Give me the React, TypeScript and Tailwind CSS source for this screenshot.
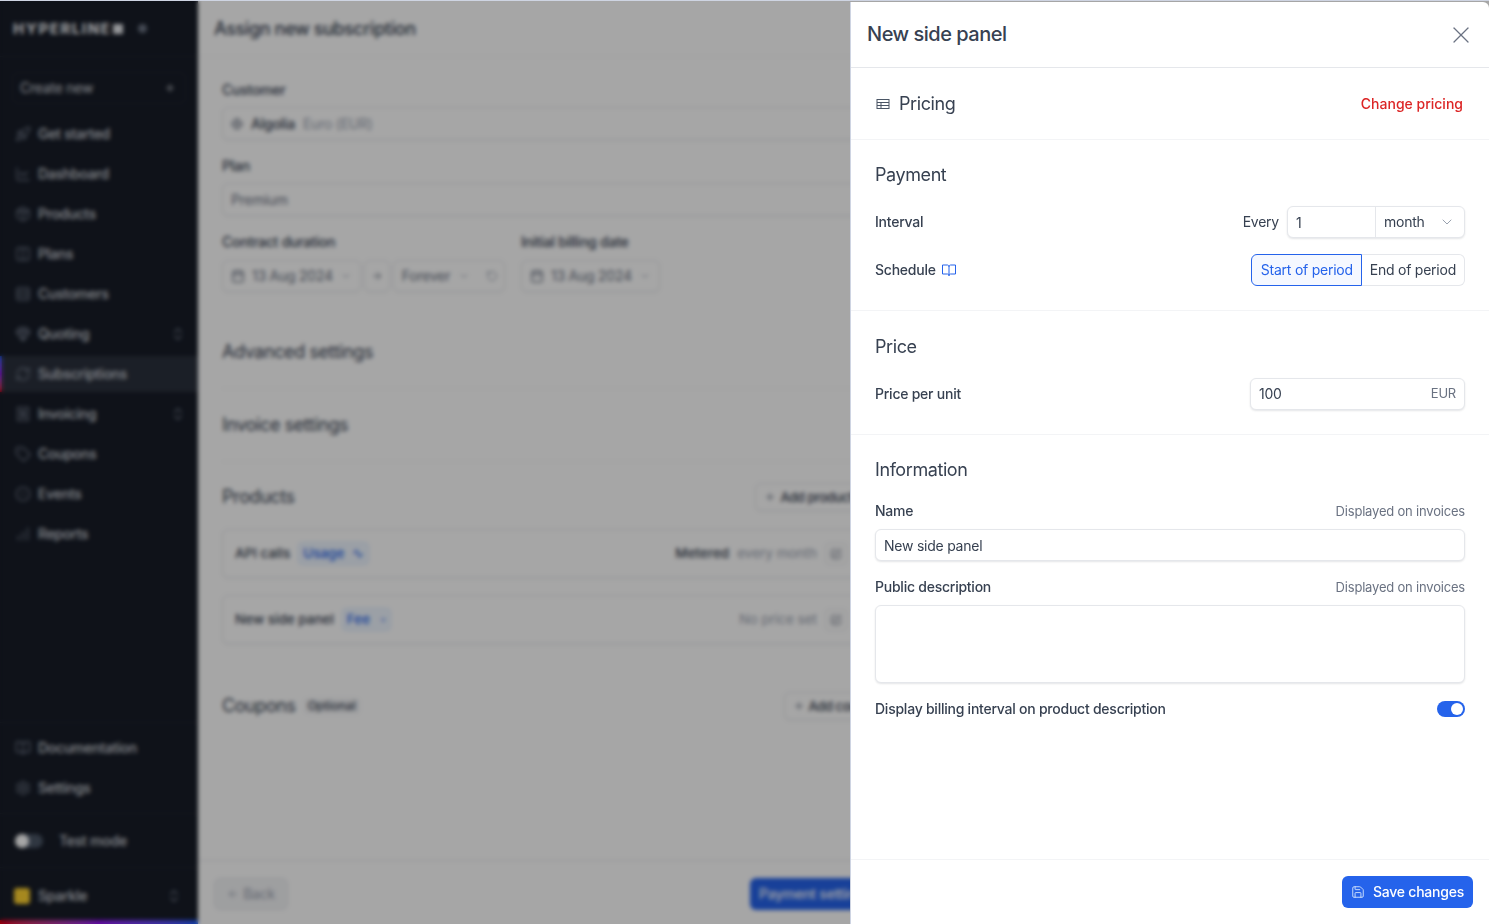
import {
  ArrowLeft,
  ArrowRight,
  BookOpen,
  Calendar,
  ChartLine,
  ChartNoAxesColumnIncreasing,
  ChevronDown,
  ChevronsUpDown,
  CircleDot,
  Columns2,
  Gem,
  Globe,
  Package,
  Plus,
  Receipt,
  RefreshCw,
  Rocket,
  RotateCcw,
  Rows3,
  Save,
  Settings,
  SquarePen,
  Tag,
  X,
} from "lucide-react";
import type { ReactNode } from "react";

interface NavItem {
  label: string;
  icon: ReactNode;
  expandable?: boolean;
  active?: boolean;
}

const iconClass = "h-4 w-4 shrink-0 text-gray-500";

const navItems: NavItem[] = [
  { label: "Get started", icon: <Rocket className={iconClass} /> },
  { label: "Dashboard", icon: <ChartLine className={iconClass} /> },
  { label: "Products", icon: <Package className={iconClass} /> },
  { label: "Plans", icon: <Columns2 className={iconClass} /> },
  { label: "Customers", icon: <Rows3 className={iconClass} /> },
  { label: "Quoting", icon: <Gem className={iconClass} />, expandable: true },
  { label: "Subscriptions", icon: <RefreshCw className={iconClass} />, active: true },
  { label: "Invoicing", icon: <Receipt className={iconClass} />, expandable: true },
  { label: "Coupons", icon: <Tag className={iconClass} /> },
  { label: "Events", icon: <CircleDot className={iconClass} /> },
  { label: "Reports", icon: <ChartNoAxesColumnIncreasing className={iconClass} /> },
];

const NavRow = ({ label, icon, expandable, active }: NavItem) => (
  <div
    className={`relative flex h-9 items-center gap-[7px] pr-3 pl-[15px] text-sm font-medium text-gray-300 ${
      active ? "bg-[#2a303c]" : ""
    }`}
  >
    {active && (
      <span className="absolute inset-y-0 left-0 w-[2px] bg-gradient-to-b from-blue-600 via-purple-600 to-red-600" />
    )}
    {icon}
    <span className="flex-1">{label}</span>
    {expandable && <ChevronsUpDown className="h-4 w-4 text-gray-500" />}
  </div>
);

const Sidebar = () => (
  <aside className="flex h-full w-[198px] shrink-0 flex-col bg-[#171c27]">
    <div className="flex h-[56px] shrink-0 items-center gap-[15px] border-b border-white/5 pl-[13px]">
      <div className="flex items-center gap-[2px] text-[15px] leading-none font-extrabold tracking-[0.1em] text-gray-200">
        HYPERLINE
        <span className="h-[10px] w-[10px] bg-gray-200" />
      </div>
      <span className="h-[9px] w-[9px] rounded-full bg-gray-500" />
    </div>
    <div className="mx-3 mt-[15px] flex h-8 items-center justify-between rounded-md border border-white/5 pr-[9px] pl-[7px] text-sm text-gray-300">
      Create new
      <Plus className="h-3 w-3" />
    </div>
    <nav className="mt-3 flex flex-col gap-1">
      {navItems.map((item) => (
        <NavRow key={item.label} {...item} />
      ))}
    </nav>
    <div className="mt-auto flex flex-col gap-1 border-t border-white/5 pt-[7px] pb-[7px]">
      <NavRow label="Documentation" icon={<BookOpen className={iconClass} />} />
      <NavRow label="Settings" icon={<Settings className={iconClass} />} />
    </div>
    <div className="flex h-[54px] items-center gap-4 border-t border-white/5 pl-[15px] text-sm font-medium text-gray-300">
      <span className="flex h-[14px] w-7 items-center rounded-full bg-gray-600">
        <span className="h-[14px] w-[14px] rounded-full bg-white" />
      </span>
      Test mode
    </div>
    <div className="flex h-[53px] items-center gap-2 border-t border-white/5 pt-[3px] pr-4 pl-[14px] text-sm font-medium text-gray-300">
      <span className="h-4 w-4 rounded-[3px] bg-amber-300" />
      <span className="flex-1">Sparkle</span>
      <ChevronsUpDown className="h-4 w-4 text-gray-500" />
    </div>
    <div className="h-1 shrink-0 bg-gradient-to-r from-red-600 via-purple-600 to-blue-600" />
  </aside>
);

const SoftBox = ({ children, className = "" }: { children: ReactNode; className?: string }) => (
  <div className={`flex items-center rounded-md border border-gray-200 bg-white shadow-xs ${className}`}>
    {children}
  </div>
);

const headingClass = "text-lg tracking-[-0.023em]";

const Background = () => (
  <main className="flex h-full flex-1 flex-col bg-white text-[#374151]">
    <header className={`flex h-[56px] shrink-0 items-center border-b border-gray-100 px-4 font-medium ${headingClass}`}>
      Assign new subscription
    </header>
    <div className="flex w-[688px] flex-1 flex-col px-6">
      <div className="mt-[23px] text-sm font-medium">Customer</div>
      <SoftBox className="mt-[7px] h-[33px] w-[700px] gap-2 px-2 text-sm">
        <Globe className="h-3 w-3 text-gray-500" />
        <span className="font-medium">Algolia</span>
        <span className="text-gray-400">Euro (EUR)</span>
      </SoftBox>
      <div className="mt-[16px] text-sm font-medium">Plan</div>
      <SoftBox className="mt-[7px] h-[33px] w-[700px] px-2 text-sm text-gray-500">Premium</SoftBox>
      <div className="mt-4 flex gap-4 text-sm font-medium">
        <div className="w-[283px]">Contract duration</div>
        <div>Initial billing date</div>
      </div>
      <div className="mt-2 flex gap-4 text-sm text-gray-500">
        <div className="flex w-[283px] gap-[3px]">
          <SoftBox className="h-8 gap-[7px] px-2">
            <Calendar className="h-3.5 w-3.5" />
            13 Aug 2024
            <ChevronDown className="h-3 w-3 text-gray-400" />
          </SoftBox>
          <SoftBox className="h-8 w-[26px] justify-center">
            <ArrowRight className="h-3 w-3" />
          </SoftBox>
          <SoftBox className="h-8 grow gap-2 pr-1 pl-2">
            Forever
            <ChevronDown className="h-3 w-3 text-gray-400" />
            <RotateCcw className="ml-2 h-3 w-3 text-gray-400" />
          </SoftBox>
        </div>
        <SoftBox className="h-8 gap-[7px] px-2">
          <Calendar className="h-3.5 w-3.5" />
          13 Aug 2024
          <ChevronDown className="h-3 w-3 text-gray-400" />
        </SoftBox>
      </div>
      <div className={`mt-[46px] border-b border-gray-100 pb-[22px] ${headingClass}`}>Advanced settings</div>
      <div className={`mt-[22px] border-b border-gray-100 pb-[22px] ${headingClass}`}>Invoice settings</div>
      <div className={`mt-[21px] flex h-7 items-center justify-between ${headingClass}`}>
        Products
        <SoftBox className="h-7 gap-1 px-2 font-medium">
          <Plus className="h-3 w-3 text-gray-500" />
          <span className="text-[13px] whitespace-nowrap">Add product</span>
        </SoftBox>
      </div>
      <SoftBox className="mt-[18px] h-[49px] justify-between pr-[14px] pl-3 text-[13.5px] font-medium tracking-normal">
        <div className="flex items-center gap-2">
          API calls
          <span className="rounded-sm border border-blue-100 bg-blue-50 px-1 text-[#2563eb]">Usage&nbsp;&nbsp;∿</span>
        </div>
        <div className="flex items-center gap-2">
          Metered <span className="font-normal text-gray-400">every month</span>
          <span className="rounded-sm border border-gray-200 p-1">
            <SquarePen className="h-3 w-3 text-gray-500" />
          </span>
        </div>
      </SoftBox>
      <SoftBox className="mt-[17px] h-[49px] justify-between pr-[14px] pl-3 text-[13.5px] font-medium tracking-normal">
        <div className="flex items-center gap-2">
          New side panel
          <span className="rounded-sm border border-blue-100 bg-blue-50 px-1 text-[#2563eb]">Fee&nbsp;&nbsp;&nbsp;▫</span>
        </div>
        <div className="flex items-center gap-2">
          <span className="font-normal text-gray-400">No price set</span>
          <span className="rounded-sm border border-gray-200 p-1">
            <SquarePen className="h-3 w-3 text-gray-500" />
          </span>
        </div>
      </SoftBox>
      <div className={`mt-[48px] -mr-[27px] flex h-7 items-center justify-between ${headingClass}`}>
        <div className="flex items-center gap-2">
          Coupons
          <span className="rounded-sm bg-gray-100 px-1 text-xs font-medium tracking-normal">Optional</span>
        </div>
        <SoftBox className="h-7 gap-1 px-2 font-medium">
          <Plus className="h-3 w-3 text-gray-500" />
          <span className="text-[13px] whitespace-nowrap">Add coupon</span>
        </SoftBox>
      </div>
    </div>
    <footer className="flex h-[64px] shrink-0 items-center border-t border-gray-200 bg-white px-4 pt-[2px] text-sm">
      <div className="flex h-8 w-[74px] items-center justify-center gap-1 rounded-md border border-gray-200 bg-gray-100 text-gray-400">
        <ArrowLeft className="h-3 w-3" />
        Back
      </div>
      <div className="ml-[462px] flex h-8 w-[140px] items-center rounded-md bg-[#2563eb] px-[9px] font-medium whitespace-nowrap text-white">
        Payment settings
      </div>
    </footer>
  </main>
);

const Field = ({ value, className = "" }: { value: string; className?: string }) => (
  <input
    readOnly
    value={value}
    className={`min-w-0 bg-transparent px-2 text-sm text-[#374151] outline-none ${className}`}
  />
);

const boxClass = "rounded-md border border-gray-200 bg-white shadow-[0_1px_2px_rgba(31,41,55,0.12)]";

const SidePanel = () => (
  <section className="absolute top-[2px] right-0 bottom-0 flex w-[639px] flex-col rounded-tr-md border-l border-[#ced4e2] bg-white text-[#374151]">
    <header className="flex h-[66px] shrink-0 items-center justify-between border-b border-gray-200 pr-[14px] pl-4">
      <h1 className="pb-px text-xl font-medium tracking-[-0.025em]">New side panel</h1>
      <X className="h-7 w-7 text-gray-500" strokeWidth={1.1} />
    </header>

    <div className="flex h-[72px] shrink-0 items-center justify-between border-b border-gray-100 pr-[26px] pl-[25px]">
      <div className={`flex items-center gap-[9px] ${headingClass}`}>
        <svg viewBox="0 0 14 12" className="h-3 w-[14px] text-gray-600" fill="none" stroke="currentColor">
          <rect x="1" y="1.5" width="12" height="9" />
          <path d="M1 4.5h12M1 7.5h12M5 4.5v6" />
        </svg>
        Pricing
      </div>
      <button className="text-sm font-medium tracking-normal text-[#dc2626]">Change pricing</button>
    </div>

    <div className="flex flex-col border-b border-gray-100 px-6 pt-[21px] pb-6">
      <h2 className={headingClass}>Payment</h2>
      <div className="mt-[17px] flex items-center justify-between">
        <span className="text-sm font-medium">Interval</span>
        <div className="flex items-center gap-2 text-sm">
          Every
          <div className={`flex h-8 w-[178px] items-stretch ${boxClass}`}>
            <Field value="1" className="w-[87px] pt-px" />
            <div className="flex flex-1 items-center justify-between border-l border-gray-200 pr-[9px] pl-2">
              month
              <ChevronDown className="h-4 w-4 text-gray-400" strokeWidth={1.5} />
            </div>
          </div>
        </div>
      </div>
      <div className="mt-4 flex items-center justify-between">
        <span className="flex items-center gap-[5px] text-sm font-medium">
          Schedule
          <svg viewBox="0 0 16 16" className="h-4 w-4 text-[#2563eb]" fill="none" stroke="currentColor">
            <path d="M8 5v9M1.5 3h5c.9 0 1.5.7 1.5 2 0-1.300.6-2 1.500-2h5v9h-5c-.9 0-1.500.5-1.500 1.500 0-1-.6-1.500-1.500-1.500h-5z" />
          </svg>
        </span>
        <div className="flex h-8 text-sm">
          <button className="rounded-l-md border border-[#2563eb] bg-[#f5f8ff] pr-2 pl-[9px] text-[#2563eb]">
            Start of period
          </button>
          <button className="rounded-r-md border border-l-0 border-gray-200 bg-white px-2">End of period</button>
        </div>
      </div>
    </div>

    <div className="flex flex-col border-b border-gray-100 px-6 pt-[22px] pb-6">
      <h2 className={headingClass}>Price</h2>
      <div className="mt-[17px] flex items-center justify-between">
        <span className="text-sm font-medium">Price per unit</span>
        <div className={`flex h-8 w-[215px] items-center justify-between pr-2 ${boxClass}`}>
          <Field value="100" className="w-[100px]" />
          <span className="text-[13px] text-gray-500">EUR</span>
        </div>
      </div>
    </div>

    <div className="flex flex-1 flex-col px-6 pt-[21px]">
      <h2 className={headingClass}>Information</h2>
      <div className="mt-[17px] flex items-center justify-between text-sm">
        <span className="font-medium">Name</span>
        <span className="text-[13px] tracking-[-0.015em] text-gray-500">Displayed on invoices</span>
      </div>
      <Field value="New side panel" className={`mt-2 h-8 w-full ${boxClass}`} />
      <div className="mt-4 flex items-center justify-between text-sm">
        <span className="font-medium">Public description</span>
        <span className="text-[13px] tracking-[-0.015em] text-gray-500">Displayed on invoices</span>
      </div>
      <textarea readOnly className={`mt-2 h-[78px] w-full resize-none outline-none ${boxClass}`} />
      <div className="mt-4 flex items-center justify-between text-sm font-medium">
        Display billing interval on product description
        <span className="flex h-4 w-7 items-center justify-end rounded-full bg-[#2563eb] pr-[2px]">
          <span className="h-3 w-3 rounded-full bg-white" />
        </span>
      </div>
    </div>

    <footer className="flex h-[65px] shrink-0 items-center justify-end border-t border-gray-100 px-4">
      <button className="flex h-8 w-[131px] items-center justify-center gap-2 rounded-md bg-[#2563eb] text-sm font-medium text-white">
        <Save className="h-3.5 w-3.5 text-blue-100" strokeWidth={1.5} />
        Save changes
      </button>
    </footer>
  </section>
);

export default function App() {
  return (
    <div className="relative flex h-[924px] w-full overflow-hidden bg-[#ced4e2] pt-px font-['Inter',sans-serif] tracking-[-0.015em]">
      <Sidebar />
      <Background />
      <div className="absolute inset-0 top-px bg-black/35 backdrop-blur-[2px]" />
      <SidePanel />
    </div>
  );
}
